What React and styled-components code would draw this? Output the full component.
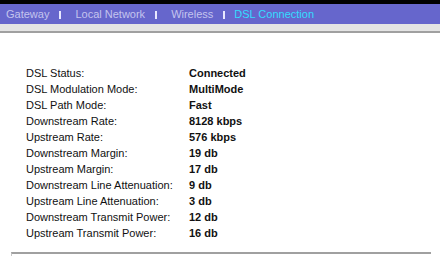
import React from 'react'
import styled, { createGlobalStyle } from 'styled-components'

const GlobalStyle = createGlobalStyle`
    html, body {
        margin: 0;
        padding: 0;
        background: #fff;
        font-family: "Liberation Sans", Arial, sans-serif;
    }
`

const Page = styled.div`
    width: 440px;
    height: 261px;
    overflow: hidden;
    background: #fff;
    border-top: 4px solid #000;
    box-sizing: border-box;
`

const NavBar = styled.nav`
    display: flex;
    align-items: center;
    height: 20px;
    padding-left: 6px;
    background: #6666cc;
    font-size: 11px;
`

const NavItem = styled.span`
    color: ${p => (p.active ? '#33ddff' : '#c4c4ee')};
    white-space: nowrap;
`

const Sep = styled.span`
    display: inline-block;
    width: 2px;
    height: 8px;
    margin: 2px ${p => p.right || 14}px 0 10px;
    background: #e8e8ff;
`

const SubBar = styled.div`
    height: 7px;
    background: #e4e4e4;
    border-bottom: 2px solid #a0a0a0;
`

const Content = styled.div`
    padding: 32px 0 0 26px;
`

const Row = styled.div`
    display: grid;
    grid-template-columns: 163px auto;
    height: 16px;
    line-height: 16px;
    font-size: 11px;
    color: #111;
`

const Value = styled.span`
    font-weight: bold;
`

const Rule = styled.div`
    margin: 11px 9px 0 11px;
    height: 2px;
    border-top: 2px solid #a0a0a0;
    border-left: 1px solid #c8c8c8;
`

const rows = [
    ['DSL Status:', 'Connected'],
    ['DSL Modulation Mode:', 'MultiMode'],
    ['DSL Path Mode:', 'Fast'],
    ['Downstream Rate:', '8128 kbps'],
    ['Upstream Rate:', '576 kbps'],
    ['Downstream Margin:', '19 db'],
    ['Upstream Margin:', '17 db'],
    ['Downstream Line Attenuation:', '9 db'],
    ['Upstream Line Attenuation:', '3 db'],
    ['Downstream Transmit Power:', '12 db'],
    ['Upstream Transmit Power:', '16 db'],
]

export default function App() {
    return (
        <>
            <GlobalStyle />
            <Page>
                <NavBar>
                    <NavItem>Gateway</NavItem>
                    <Sep />
                    <NavItem>Local Network</NavItem>
                    <Sep />
                    <NavItem>Wireless</NavItem>
                    <Sep right={9} />
                    <NavItem active>DSL Connection</NavItem>
                </NavBar>
                <SubBar />
                <Content>
                    {rows.map(([label, value]) => (
                        <Row key={label}>
                            <span>{label}</span>
                            <Value>{value}</Value>
                        </Row>
                    ))}
                </Content>
                <Rule />
            </Page>
        </>
    )
}
